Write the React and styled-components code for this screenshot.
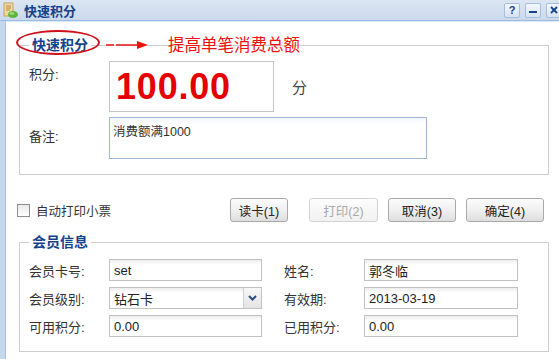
import React from 'react';
import styled, { createGlobalStyle } from 'styled-components';

const GlobalStyle = createGlobalStyle`
  html, body {
    margin: 0;
    padding: 0;
    background: #fff;
  }
  body {
    font-family: "Liberation Sans", "Noto Sans CJK SC", sans-serif;
    color: #222;
  }
`;

const Window = styled.div`
  width: 559px;
  height: 359px;
  overflow: hidden;
  display: flex;
  flex-direction: column;
  background: #fff;
`;

const TitleBar = styled.div`
  height: 20px;
  display: flex;
  align-items: center;
  padding: 0 0 0 2px;
  background: linear-gradient(#dce6f3, #cbd9eb);
  border-bottom: 1px solid #99bbe8;
  box-shadow: 0 1px 0 #dfe8f6;
`;

const Title = styled.span`
  margin-left: 5px;
  font-size: 13px;
  font-weight: bold;
  color: #15428b;
`;

const Tools = styled.div`
  margin-left: auto;
  display: flex;
  gap: 5px;
  margin-right: -3px;
`;

const ToolButton = styled.span`
  width: 14px;
  height: 13px;
  border: 1px solid #a7bfdc;
  border-radius: 2px;
  background: linear-gradient(#f4f8fd, #d5e2f2);
  display: flex;
  align-items: center;
  justify-content: center;
  font-size: 11px;
  font-weight: bold;
  color: #15428b;
  line-height: 1;
`;

const Body = styled.div`
  flex: 1;
  padding: 16px 10px 0 14px;
  border-left: 5px solid #c8d8ec;
  box-shadow: inset 1px 0 0 #a9c1df;
`;

const FieldSet = styled.fieldset`
  margin: ${({ $top }) => $top || 0}px 0 0;
  padding: ${({ $pad }) => $pad};
  border: 1px solid #cdcdcd;
  min-width: 0;
`;

const Legend = styled.legend`
  position: relative;
  padding: 0 3px;
  font-size: 14px;
  line-height: 16px;
  font-weight: bold;
  color: #15428b;
`;

const Ellipse = styled.span`
  position: absolute;
  left: -13px;
  top: -7px;
  width: 80px;
  height: 21px;
  border: 2px solid #d0101a;
  border-radius: 50%;
`;

const Note = styled.span`
  position: absolute;
  left: 77px;
  top: 0;
  display: flex;
  align-items: center;
  white-space: nowrap;
  font-size: 16.5px;
  font-weight: normal;
  color: #ee1111;
  gap: 20px;
`;

const PointsGrid = styled.div`
  display: grid;
  grid-template-columns: 80px auto 1fr;
  row-gap: 5px;
`;

const Label = styled.div`
  font-size: 13px;
  color: #333;
  padding-top: ${({ $top }) => $top || 0}px;
  padding-left: ${({ $indent }) => $indent || 0}px;
  align-self: ${({ $top }) => ($top !== undefined ? 'start' : 'center')};
`;

const BigBox = styled.div`
  width: 157px;
  height: 49px;
  border: 1px solid #c4c4c4;
  display: flex;
  align-items: center;
  padding-left: 6px;
  box-sizing: content-box;
  font-size: 36px;
  font-weight: bold;
  color: #e50000;
  letter-spacing: 0.8px;
`;

const Unit = styled.div`
  align-self: center;
  margin-left: 18px;
  font-size: 15px;
  color: #444;
`;

const Remark = styled.div`
  grid-column: 2 / 4;
  width: 310px;
  height: 34px;
  padding: 3px 3px;
  border: 1px solid #9fb6d2;
  background: linear-gradient(#f2f6fa, #fff 6px);
  font-size: 12.5px;
  color: #333;
  box-sizing: content-box;
`;

const ActionRow = styled.div`
  margin: 23px 5px 0 -2px;
  height: 24px;
  display: flex;
  align-items: center;
`;

const CheckLabel = styled.label`
  display: flex;
  align-items: center;
  gap: 6px;
  font-size: 12.5px;
  color: #333;
  margin-right: auto;
`;

const CheckBox = styled.span`
  width: 11px;
  height: 11px;
  border: 1px solid #8d8d8d;
  background: linear-gradient(#e9e9e9, #fff);
`;

const Button = styled.button`
  width: ${({ $w }) => $w}px;
  height: 24px;
  margin-left: ${({ $gap }) => $gap}px;
  padding: 0;
  border: 1px solid ${({ disabled }) => (disabled ? '#d3d3d3' : '#a9a9a9')};
  border-radius: 3px;
  background: ${({ disabled }) =>
    disabled ? 'linear-gradient(#fdfdfd, #f1f1f1)' : 'linear-gradient(#fcfcfc, #f0f0f0 50%, #dedede)'};
  font-family: inherit;
  font-size: 12.5px;
  color: ${({ disabled }) => (disabled ? '#a8a8a8' : '#222')};
`;

const MemberGrid = styled.div`
  display: grid;
  grid-template-columns: 80px 153px 102px 154px;
  grid-auto-rows: 22px;
  row-gap: 6px;
`;

const Input = styled.div`
  border: 1px solid #c2c2c2;
  background: linear-gradient(#ededed, #fff 5px);
  display: flex;
  align-items: center;
  padding-left: 4px;
  font-size: 13px;
  color: #222;
`;

const Combo = styled(Input)`
  padding-right: 0;
`;

const ComboText = styled.span`
  flex: 1;
`;

const Trigger = styled.span`
  width: 17px;
  height: 100%;
  border-left: 1px solid #d0d0d0;
  background: linear-gradient(#f7f7f7, #e4e4e4);
  display: flex;
  align-items: center;
  justify-content: center;
`;

const WindowIcon = () => (
  <svg width="17" height="17" viewBox="0 0 17 17">
    <rect x="2" y="1" width="9" height="13" fill="#efd9a2" stroke="#c8a45a" />
    <path d="M4 4h5M4 6h5M4 8h4" stroke="#b48a3c" strokeWidth="1" />
    <ellipse cx="11" cy="12.5" rx="5" ry="3.5" fill="#5bb63a" />
    <ellipse cx="10" cy="11.5" rx="2.5" ry="1.3" fill="#9ede7c" />
  </svg>
);

const Arrow = () => (
  <svg width="42" height="10" viewBox="0 0 42 10">
    <path d="M0 5h8M10 5h22" stroke="#ee1111" strokeWidth="1.6" />
    <path d="M31 1L42 5L31 9Z" fill="#ee1111" />
  </svg>
);

const Chevron = () => (
  <svg width="9" height="6" viewBox="0 0 9 6">
    <path d="M1 1l3.5 3.5L8 1" stroke="#2a4d86" strokeWidth="2" fill="none" />
  </svg>
);

const members = [
  ['会员卡号:', 'set', '姓名:', '郭冬临'],
  ['会员级别:', '钻石卡', '有效期:', '2013-03-19'],
  ['可用积分:', '0.00', '已用积分:', '0.00'],
];

const buttons = [
  { text: '读卡(1)', w: 58, gap: 0 },
  { text: '打印(2)', w: 69, gap: 21, disabled: true },
  { text: '取消(3)', w: 68, gap: 10 },
  { text: '确定(4)', w: 78, gap: 10 },
];

const App = () => (
  <Window>
    <GlobalStyle />
    <TitleBar>
      <WindowIcon />
      <Title>快速积分</Title>
      <Tools>
        <ToolButton>?</ToolButton>
        <ToolButton>
          <svg width="8" height="8" viewBox="0 0 8 8">
            <rect x="0" y="5" width="8" height="2" fill="#15428b" />
          </svg>
        </ToolButton>
        <ToolButton>
          <svg width="8" height="8" viewBox="0 0 8 8">
            <path d="M1 1l6 6M7 1L1 7" stroke="#15428b" strokeWidth="1.8" />
          </svg>
        </ToolButton>
      </Tools>
    </TitleBar>
    <Body>
      <FieldSet $pad="8px 9px 15px 9px">
        <Legend>
          快速积分
          <Ellipse />
          <Note>
            <Arrow />
            提高单笔消费总额
          </Note>
        </Legend>
        <PointsGrid>
          <Label $top={3}>积分:</Label>
          <BigBox>100.00</BigBox>
          <Unit>分</Unit>
          <Label $top={9}>备注:</Label>
          <Remark>消费额满1000</Remark>
        </PointsGrid>
      </FieldSet>
      <ActionRow>
        <CheckLabel>
          <CheckBox />
          自动打印小票
        </CheckLabel>
        {buttons.map(b => (
          <Button key={b.text} $w={b.w} $gap={b.gap} disabled={b.disabled}>
            {b.text}
          </Button>
        ))}
      </ActionRow>
      <FieldSet $pad="9px 9px 14px 9px" $top={12}>
        <Legend>会员信息</Legend>
        <MemberGrid>
          {members.map(([l1, v1, l2, v2]) => (
            <React.Fragment key={l1}>
              <Label>{l1}</Label>
              {l1 === '会员级别:' ? (
                <Combo>
                  <ComboText>{v1}</ComboText>
                  <Trigger><Chevron /></Trigger>
                </Combo>
              ) : (
                <Input>{v1}</Input>
              )}
              <Label $indent={22}>{l2}</Label>
              <Input>{v2}</Input>
            </React.Fragment>
          ))}
        </MemberGrid>
      </FieldSet>
    </Body>
  </Window>
);

export default App;
